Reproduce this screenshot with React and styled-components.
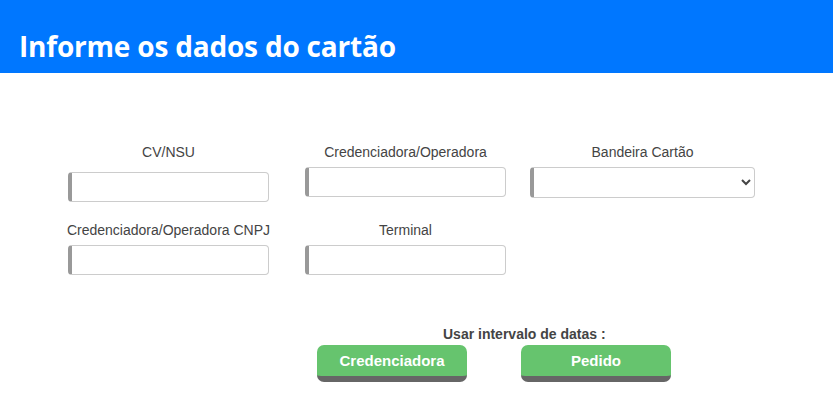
import React from 'react';
import styled, { createGlobalStyle } from 'styled-components';

const GlobalStyle = createGlobalStyle`
  body {
    margin: 0;
    background: #fff;
    font-family: "Liberation Sans", Arial, sans-serif;
  }
`;

const Header = styled.div`
  height: 73px;
  background: #0077ff;
  display: flex;
  align-items: flex-end;
  padding-left: 19px;
  box-sizing: border-box;
`;

const Title = styled.h1`
  margin: 0 0 9px 0;
  color: #fff;
  font-family: "Open Sans", sans-serif;
  font-weight: 700;
  font-size: 28px;
  line-height: 36px;
  letter-spacing: -0.2px;
`;

const Form = styled.div`
  display: grid;
  grid-template-columns: repeat(3, 237px);
  row-gap: 20px;
  padding: 71px 0 0 50px;
`;

const Field = styled.div`
  display: flex;
  flex-direction: column;
  align-items: center;
`;

const Label = styled.label`
  font-size: 14px;
  line-height: 16px;
  color: #444;
  margin-bottom: ${p => p.$gap || 7}px;
`;

const Input = styled.input`
  box-sizing: border-box;
  width: ${p => p.$width || 201}px;
  height: 30px;
  border: 1px solid #ccc;
  border-left: 4px solid #999;
  border-radius: 4px;
  background: #fff;
  outline: none;
`;

const Select = styled.select`
  box-sizing: border-box;
  width: 225px;
  height: 31px;
  border: 1px solid #ccc;
  border-left: 4px solid #999;
  border-radius: 4px;
  background: #fff;
  color: #444;
  outline: none;
`;

const Actions = styled.div`
  margin: 51px 0 0 317px;
  width: 354px;
`;

const ActionsLabel = styled.div`
  font-size: 14px;
  font-weight: bold;
  color: #444;
  line-height: 16px;
  padding-left: 126px;
  margin-bottom: 3px;
`;

const ButtonRow = styled.div`
  display: flex;
  justify-content: space-between;
`;

const Button = styled.button`
  box-sizing: border-box;
  width: 150px;
  height: 37px;
  padding: 0 0 1px;
  border: none;
  border-bottom: 6px solid #666;
  border-radius: 7px;
  background: #66c46e;
  color: #fff;
  font-family: "Liberation Sans", Arial, sans-serif;
  font-weight: bold;
  font-size: 15px;
  cursor: pointer;
`;

export default function App() {
  return (
    <>
      <GlobalStyle />
      <Header>
        <Title>Informe os dados do cartão</Title>
      </Header>
      <Form>
        <Field>
          <Label $gap={12}>CV/NSU</Label>
          <Input />
        </Field>
        <Field>
          <Label>Credenciadora/Operadora</Label>
          <Input />
        </Field>
        <Field>
          <Label>Bandeira Cartão</Label>
          <Select>
            <option></option>
          </Select>
        </Field>
        <Field>
          <Label>Credenciadora/Operadora CNPJ</Label>
          <Input />
        </Field>
        <Field>
          <Label>Terminal</Label>
          <Input />
        </Field>
      </Form>
      <Actions>
        <ActionsLabel>Usar intervalo de datas :</ActionsLabel>
        <ButtonRow>
          <Button>Credenciadora</Button>
          <Button>Pedido</Button>
        </ButtonRow>
      </Actions>
    </>
  );
}
